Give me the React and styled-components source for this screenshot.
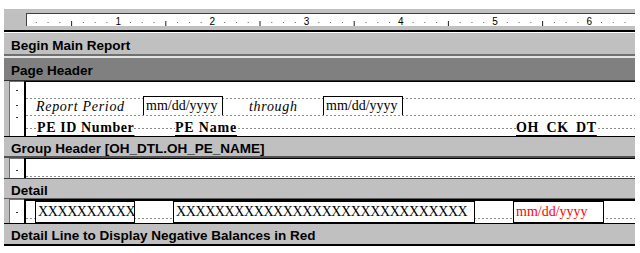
import React from "react";
import styled, { createGlobalStyle } from "styled-components";

const GlobalStyle = createGlobalStyle`
  body {
    margin: 0;
    background: #fff;
  }
`;

const Page = styled.div`
  width: 631px;
  margin: 9px 0 0 4px;
  font-family: "Liberation Sans", Arial, sans-serif;
`;

const RulerStrip = styled.div`
  display: flex;
  height: 17px;
  padding: 4px 0 0 22px;
  background: #c0c0c0;
  border-bottom: 2px solid #000;
`;

const RulerTrack = styled.div`
  flex: 1;
  height: 12px;
  background: #fff;
  border-top: 1px solid #404040;
  border-left: 1px solid #404040;
  overflow: hidden;
`;

const Band = styled.div`
  display: flex;
  align-items: center;
  height: ${(p) => p.$h - 3}px;
  padding: 3px 0 0 7px;
  background: ${(p) => (p.$dark ? "#808080" : "#c0c0c0")};
  border-top: ${(p) => p.$top || "1px solid #fff"};
  border-bottom: ${(p) => p.$bottom || "2px solid #6e6e6e"};
  font-size: 13.5px;
  font-weight: bold;
  color: #000;
  white-space: nowrap;
`;

const Section = styled.div`
  display: flex;
  height: ${(p) => p.$h}px;
`;

const Gutter = styled.div`
  width: 5px;
  background: #c0c0c0;
`;

const MarginBox = styled.div`
  display: flex;
  flex-direction: column;
  align-items: center;
  width: 14px;
  background: #fff;
  border-left: 1px solid #707070;
  border-top: 1px solid #707070;
`;

const Dot = styled.span`
  width: 2px;
  height: 1px;
  margin-top: ${(p) => p.$mt}px;
  background: #303030;
`;

const dashes = (ys) =>
  ys.length
    ? `
  background-image: ${ys
    .map(() => "repeating-linear-gradient(to right, #8c8c8c 0 2px, transparent 2px 4px)")
    .join(", ")};
  background-size: ${ys.map(() => "100% 1px").join(", ")};
  background-repeat: no-repeat;
  background-position: ${ys.map((y) => `0 ${y}px`).join(", ")};
`
    : "";

const Canvas = styled.div`
  flex: 1;
  display: flex;
  flex-direction: column;
  padding-top: ${(p) => p.$pt || 0}px;
  background-color: #fff;
  border-left: 2px solid #000;
  border-top: ${(p) => p.$top || "1px solid #000"};
  ${(p) => dashes(p.$lines || [])}
`;

const Row = styled.div`
  display: flex;
  align-items: ${(p) => p.$align || "center"};
  height: ${(p) => p.$h}px;
  ${(p) => dashes(p.$lines || [])}
`;

const Cell = styled.div`
  flex: none;
  width: ${(p) => p.$w}px;
  margin-left: ${(p) => p.$ml || 0}px;
  padding-top: ${(p) => p.$pt || 0}px;
`;

const Text = styled.span`
  font-family: "Liberation Serif", "Times New Roman", serif;
  font-size: 14px;
  font-style: ${(p) => (p.$italic ? "italic" : "normal")};
  font-weight: ${(p) => (p.$bold ? "bold" : "normal")};
  letter-spacing: ${(p) => p.$ls ?? 0.7}px;
  word-spacing: ${(p) => p.$ws || 0}px;
  text-decoration: ${(p) => (p.$under ? "underline" : "none")};
  text-decoration-thickness: 1px;
  text-underline-offset: 3px;
  background: #fff;
  color: #000;
  white-space: nowrap;
`;

const Field = styled.div`
  flex: none;
  display: flex;
  align-items: center;
  box-sizing: border-box;
  width: ${(p) => p.$w}px;
  height: ${(p) => p.$h}px;
  margin-left: ${(p) => p.$ml || 0}px;
  padding-left: 2px;
  background: #fff;
  border: 1px solid #000;
  border-bottom: ${(p) => (p.$open ? "none" : "1px solid #000")};
  font-family: "Liberation Serif", "Times New Roman", serif;
  font-size: 14px;
  letter-spacing: ${(p) => p.$ls ?? 0}px;
  color: ${(p) => (p.$red ? "#ff0000" : "#000")};
  white-space: nowrap;
  overflow: hidden;
`;

const Ruler = () => {
  const origin = 24 - 27;
  const inch = 94.2;
  const marks = [];
  for (let k = 1; k <= 53; k++) {
    const x = origin + (k * inch) / 8;
    if (k % 8 === 0) {
      marks.push(
        <text key={k} x={x} y={9} fontSize="10" fontFamily="Liberation Sans, sans-serif" textAnchor="middle" fill="#000">
          {k / 8}
        </text>
      );
    } else if (k % 4 === 0) {
      marks.push(<rect key={k} x={x} y={5} width={1} height={5} fill="#202020" />);
    } else {
      marks.push(<rect key={k} x={x} y={6} width={1} height={1} fill="#606060" />);
    }
  }
  return (
    <svg width="612" height="12">
      {marks}
    </svg>
  );
};

const X = (n) => "X".repeat(n);

export default function App() {
  return (
    <Page>
      <GlobalStyle />
      <RulerStrip>
        <RulerTrack>
          <Ruler />
        </RulerTrack>
      </RulerStrip>

      <Band $h={21} $bottom="2px solid #707070">Begin Main Report</Band>
      <Band $h={22} $dark $top="2px solid #e4e4e4" $bottom="1px solid #303030">
        Page Header
      </Band>
      <Section $h={55}>
        <Gutter />
        <MarginBox>
          <Dot $mt={8} />
          <Dot $mt={14} />
          <Dot $mt={11} />
        </MarginBox>
        <Canvas $pt={14}>
          <Row $h={19} $lines={[2]}>
            <Cell $ml={10} $w={107}>
              <Text $italic>Report Period</Text>
            </Cell>
            <Field $w={80} $h={19} $open>mm/dd/yyyy</Field>
            <Cell $ml={26} $w={74}>
              <Text $italic>through</Text>
            </Cell>
            <Field $w={80} $h={19} $open>mm/dd/yyyy</Field>
          </Row>
          <Row $h={21} $lines={[0, 13]} $align="flex-start">
            <Cell $ml={11} $w={138} $pt={3}>
              <Text $bold $under $ls={0.6}>PE ID Number</Text>
            </Cell>
            <Cell $w={341} $pt={3}>
              <Text $bold $under $ls={0.8}>PE Name</Text>
            </Cell>
            <Cell $w={100} $pt={3}>
              <Text $bold $under $ls={0.7} $ws={3}>OH CK DT</Text>
            </Cell>
          </Row>
        </Canvas>
      </Section>

      <Band $h={19} $top="1px solid #000" $bottom="2px solid #505050">
        Group Header [OH_DTL.OH_PE_NAME]
      </Band>
      <Section $h={20}>
        <Gutter />
        <MarginBox>
          <Dot $mt={11} />
        </MarginBox>
        <Canvas $lines={[17]} />
      </Section>

      <Band $h={19} $top="1px solid #404040" $bottom="1px solid #606060">
        Detail
      </Band>
      <Section $h={24}>
        <Gutter />
        <MarginBox>
          <Dot $mt={12} />
        </MarginBox>
        <Canvas $top="2px solid #000">
          <Row $h={22} $lines={[17]}>
            <Field $ml={9} $w={100} $h={22} $ls={-0.4}>{X(10)}</Field>
            <Field $ml={38} $w={302} $h={22} $ls={-0.4}>{X(30)}</Field>
            <Field $ml={38} $w={91} $h={22} $red>mm/dd/yyyy</Field>
          </Row>
        </Canvas>
      </Section>

      <Band $h={20} $top="1px solid #000" $bottom="2px solid #000">
        Detail Line to Display Negative Balances in Red
      </Band>
    </Page>
  );
}
